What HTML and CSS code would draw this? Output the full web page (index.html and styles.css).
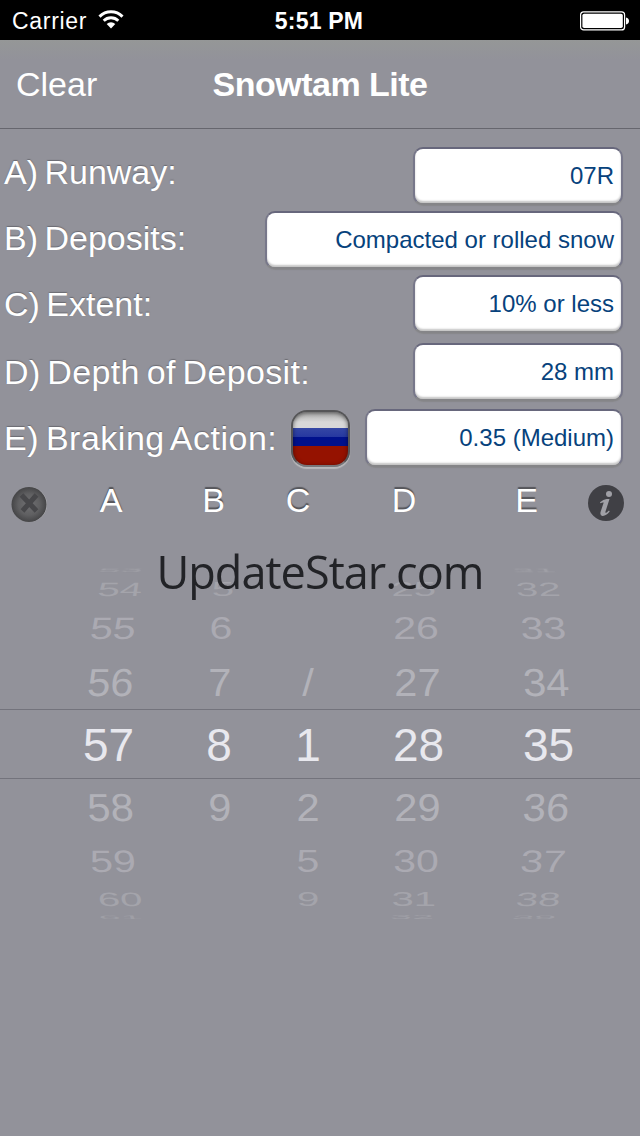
FILE: index.html
```html
<!DOCTYPE html>
<html lang="en">
<head>
  <meta charset="utf-8">
  <title>Snowtam Lite</title>
  <link rel="stylesheet" href="styles.css">
</head>
<body>
  <div class="status-bar">
    <div class="carrier">
      <span>Carrier</span>
      <svg class="wifi" width="26" height="19" viewBox="0 0 26 19">
        <path d="M1.5 6.6a16.3 16.3 0 0 1 23 0" fill="none" stroke="#fff" stroke-width="3"/>
        <path d="M5.7 10.8a10.3 10.3 0 0 1 14.6 0" fill="none" stroke="#fff" stroke-width="2.8"/>
        <path d="M13 18.5l-4.3-4.4a6.2 6.2 0 0 1 8.6 0z" fill="#fff"/>
      </svg>
    </div>
    <div class="time">5:51 PM</div>
    <svg class="battery" width="50" height="20" viewBox="0 0 50 20">
      <rect x="0.6" y="0.9" width="44" height="18" rx="3" fill="none" stroke="#fff" stroke-width="1.2"/>
      <rect x="2.4" y="2.7" width="40.4" height="14.4" rx="1.8" fill="#fff"/>
      <path d="M46 6.5q3 .6 3 3.5t-3 3.5z" fill="#fff"/>
    </svg>
  </div>

  <div class="nav-bar">
    <div class="clear">Clear</div>
    <div class="title">Snowtam Lite</div>
  </div>

  <div class="form">
    <div class="row runway">
      <label>A) Runway:</label>
      <div class="field">07R</div>
    </div>
    <div class="row deposits">
      <label>B) Deposits:</label>
      <div class="field wide">Compacted or rolled snow</div>
    </div>
    <div class="row extent">
      <label>C) Extent:</label>
      <div class="field">10% or less</div>
    </div>
    <div class="row depth">
      <label>D) Depth of Deposit:</label>
      <div class="field">28 mm</div>
    </div>
    <div class="row braking">
      <label>E) Braking Action:</label>
      <div class="flag"></div>
      <div class="field medium">0.35 (Medium)</div>
    </div>
  </div>

  <div class="headers">
    <svg class="close" width="38" height="38" viewBox="0 0 38 38">
      <defs>
        <radialGradient id="ball">
          <stop offset="0" stop-color="#707072"/>
          <stop offset="0.6" stop-color="#606062"/>
          <stop offset="1" stop-color="#454547"/>
        </radialGradient>
      </defs>
      <circle cx="19.5" cy="19.5" r="17.5" fill="#b4b4b8"/>
      <circle cx="19" cy="19.5" r="17.5" fill="url(#ball)"/>
      <path d="M11.500 10l15 16M26.500 10l-14 16" stroke="#47474a" stroke-width="5"/>
    </svg>
    <span>A</span>
    <span>B</span>
    <span>C</span>
    <span>D</span>
    <span>E</span>
    <svg class="info" width="38" height="38" viewBox="0 0 38 38">
      <circle cx="19" cy="19" r="18" fill="#404045"/>
      <circle cx="22" cy="10" r="3" fill="#a0a0a6"/>
      <path d="M13 18.300q3.500-2.800 6.500-3.300h3l-4 12.500q-.5 1.800 1.200.9l2.300-1.800.7 1q-3.800 4.600-7.200 4.300-3-.4-1.800-4.300l3-9.100q-1.600-.4-3.200.8z" fill="#a0a0a6"/>
    </svg>
  </div>

  <div class="picker">
    <div class="wheel edge up"><span>53</span><span></span><span></span><span></span><span>31</span></div>
    <div class="wheel far up"><span>54</span><span>5</span><span></span><span>25</span><span>32</span></div>
    <div class="wheel mid up"><span>55</span><span>6</span><span></span><span>26</span><span>33</span></div>
    <div class="wheel near up"><span>56</span><span>7</span><span>/</span><span>27</span><span>34</span></div>
    <div class="wheel selected"><span>57</span><span>8</span><span>1</span><span>28</span><span>35</span></div>
    <div class="wheel near down"><span>58</span><span>9</span><span>2</span><span>29</span><span>36</span></div>
    <div class="wheel mid down"><span>59</span><span></span><span>5</span><span>30</span><span>37</span></div>
    <div class="wheel far down"><span>60</span><span></span><span>9</span><span>31</span><span>38</span></div>
    <div class="wheel edge down"><span>61</span><span></span><span></span><span>32</span><span>39</span></div>
    <div class="watermark">UpdateStar.com</div>
  </div>
</body>
</html>
```

FILE: styles.css
```css
* {
  box-sizing: border-box;
}

body {
  margin: 0;
  width: 640px;
  height: 1136px;
  overflow: hidden;
  background-color: #92929a;
  color: white;
  font-family: "Liberation Sans", Arial, sans-serif;
}

/* Status bar */
.status-bar {
  display: grid;
  grid-template-columns: 1fr auto 1fr;
  align-items: center;
  height: 40px;
  padding: 0 11px 0 12px;
  background-color: black;
  font-size: 23px;
}

.carrier {
  display: flex;
  align-items: center;
  gap: 11px;
  padding-top: 2px;
  letter-spacing: 0.7px;
}

.wifi {
  margin-top: -4px;
}

.time {
  padding-top: 2px;
  font-weight: bold;
  letter-spacing: 0.2px;
  margin-left: -3px;
}

.battery {
  justify-self: end;
  margin-top: 1px;
  margin-right: -1px;
}

/* Navigation bar */
.nav-bar {
  display: grid;
  grid-template-columns: 1fr auto 1fr;
  align-items: center;
  height: 89px;
  padding: 0 16px;
  border-bottom: 1px solid #66666e;
  background: linear-gradient(#959797, #92929a 20px);
  font-size: 34px;
}

.title {
  font-weight: bold;
  letter-spacing: -0.5px;
}

/* Form */
.form {
  padding: 18px 17px 0 4px;
}

.row {
  display: flex;
  align-items: center;
  height: 58px;
  margin-bottom: 6px;
}

.extent {
  margin-bottom: 10px;
}

.depth {
  margin-bottom: 8px;
}

label {
  font-size: 34px;
  word-spacing: -3px;
  white-space: nowrap;
  text-shadow: 0 -1px 1px rgba(70, 70, 75, 0.5);
}

.runway label {
  padding-bottom: 7px;
}

.deposits label {
  padding-bottom: 3px;
}

.depth label {
  letter-spacing: 0.35px;
}

.braking label {
  letter-spacing: 0.5px;
}

.field {
  width: 210px;
  height: 58px;
  margin-left: auto;
  padding-right: 7px;
  border: 2px solid #77778a;
  border-top-color: #67677c;
  border-bottom-color: #858588;
  border-radius: 10px;
  background-color: white;
  box-shadow: inset 0 -2px 2px #c4c4c4, 0 1px 1px #88888b;
  color: #07427c;
  font-size: 24px;
  line-height: 53px;
  text-align: right;
}

.wide {
  width: 358px;
}

.medium {
  width: 258px;
}

.flag {
  width: 59px;
  height: 57px;
  margin: 1px auto 0 14px;
  border: 2px solid #555557;
  border-bottom-color: #77777a;
  border-radius: 16px;
  background: linear-gradient(#a8a8a8, #d8d8d8 10px, #d8d8d8 16px, #3547a5 16px, #2638a0 25px, #00118c 25px, #00118c 34px, #951200 34px);
  box-shadow: 0 2px 1px #b9b9bb, inset 0 1px 4px rgba(0, 0, 0, 0.5);
}

.braking .field {
  margin-left: 0;
}

/* Column headers */
.headers {
  display: grid;
  grid-template-columns: 62px 98px 107px 62px 150px 95px 66px;
  align-items: center;
  height: 66px;
  font-size: 34px;
  text-align: center;
  text-shadow: 0 -2px 1px #55555a;
}

.headers span {
  padding-bottom: 11px;
}

.close {
  margin: -4px 0 0 10px;
}

.info {
  margin: -6px 0 0 13px;
}

/* Picker */
.picker {
  position: relative;
  padding-top: 25px;
}

.wheel {
  display: grid;
  grid-template-columns: 109px 112px 66px 155px 105px;
  align-items: center;
  padding-left: 54px;
  color: #b2b2b9;
  font-size: 42px;
  line-height: 2px;
  text-align: center;
  transform-origin: 310px center;
}

.selected {
  height: 70px;
  border-top: 1px solid #73737c;
  border-bottom: 1px solid #73737c;
  color: #e8e8ee;
  font-size: 46px;
}

.selected span {
  padding-top: 2px;
}

.near {
  height: 55px;
  transform: translateY(1px) scale(0.99, 0.93);
}

.mid {
  height: 53px;
  transform: translateY(1px) scale(0.978, 0.74);
  color: #abaab2;
}

.far {
  height: 24px;
  transform: translateY(1px) scale(0.957, 0.46);
  color: #a4a4ab;
}

.edge {
  height: 13px;
  transform: scale(0.94, 0.12);
  color: #9f9fa6;
}

/* The outer columns lean towards the middle of the wheel */
.up span:first-child,
.down span:last-child {
  transform: skewX(-4deg);
}

.up span:last-child,
.down span:first-child {
  transform: skewX(3deg);
}

.far span:first-child {
  padding-left: 6px;
}

.watermark {
  position: absolute;
  top: 0;
  left: 0;
  width: 640px;
  color: #222327;
  font-family: "Open Sans", "Noto Sans", sans-serif;
  font-size: 45px;
  letter-spacing: -0.95px;
  line-height: 66px;
  text-align: center;
}
```
